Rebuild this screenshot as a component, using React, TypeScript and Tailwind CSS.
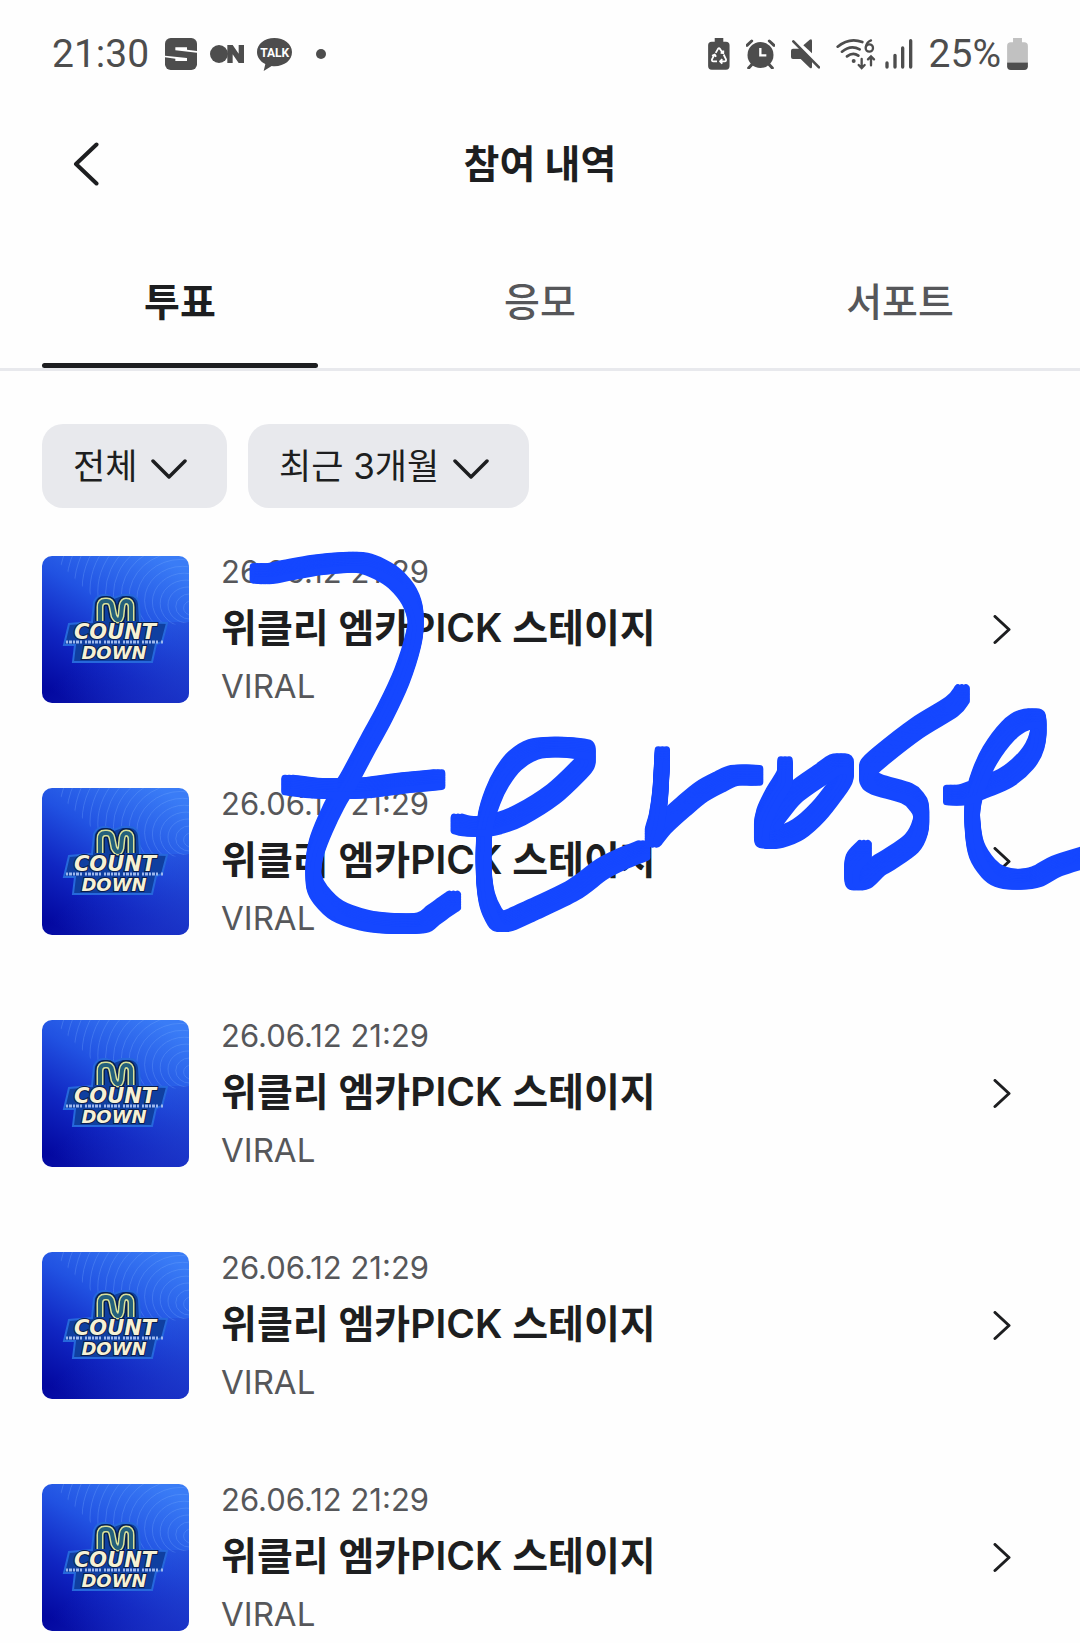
import React from "react";

type Point = [number, number];

/* Smooth curve through a list of pen positions. */
function smooth(points: Point[]): string {
  let d = `M${points[0][0]} ${points[0][1]}`;
  for (let i = 0; i < points.length - 1; i++) {
    const p0 = points[i - 1] ?? points[i];
    const p1 = points[i];
    const p2 = points[i + 1];
    const p3 = points[i + 2] ?? p2;
    d += `C${p1[0] + (p2[0] - p0[0]) / 6} ${p1[1] + (p2[1] - p0[1]) / 6} ${p2[0] - (p3[0] - p1[0]) / 6} ${p2[1] - (p3[1] - p1[1]) / 6} ${p2[0]} ${p2[1]}`;
  }
  return d;
}

const leftStrokes: Point[][] = [
  [[172, 130], [205, 131], [260, 121], [350, 105], [440, 97], [490, 99], [540, 118], [585, 147], [628, 200], [647, 262], [640, 330], [605, 440], [555, 548], [505, 640], [449, 745], [411, 810], [375, 885], [350, 950], [341, 1000], [342, 1055], [362, 1095], [412, 1142], [490, 1170], [570, 1180], [665, 1178], [700, 1155], [735, 1130], [760, 1113]],
  [[267, 765], [340, 774], [420, 776], [500, 773], [600, 760], [650, 755], [713, 749]],
  [[775, 882], [800, 888], [850, 889], [890, 882], [960, 855], [1060, 792], [1140, 717], [1161, 690], [1161, 665], [1140, 656], [1070, 651], [1000, 658], [945, 692], [905, 744], [878, 800], [857, 870], [851, 950], [852, 1040], [862, 1110], [884, 1160], [900, 1174], [925, 1172], [990, 1143], [1120, 1080], [1205, 1018], [1270, 985], [1328, 962]],
  [[1387, 680], [1385, 720], [1380, 800], [1370, 870], [1358, 922], [1395, 880], [1450, 830], [1505, 785], [1560, 755], [1605, 736], [1667, 736]],
];

const rightStrokes: Point[][] = [
  [[435, 320], [433, 355], [400, 410], [372, 470], [366, 525], [385, 535], [415, 533], [475, 508], [535, 455], [590, 385], [615, 345], [615, 315], [585, 314], [540, 345], [470, 395], [430, 440], [400, 480]],
  [[966, 104], [935, 140], [830, 205], [720, 290], [684, 325], [684, 352], [710, 373], [800, 400], [830, 425], [843, 450], [841, 500], [815, 550], [745, 600], [715, 618], [675, 655], [640, 655], [640, 608], [672, 571]],
  [[932, 405], [970, 404], [1030, 382], [1100, 352], [1160, 300], [1190, 245], [1193, 182], [1150, 181], [1105, 212], [1050, 285], [1018, 355], [999, 425], [998, 500], [1010, 570], [1045, 625], [1080, 650], [1130, 658], [1190, 650], [1250, 618], [1345, 588]],
];

/* The marker has a rectangular nib, built from offset copies of each stroke. */
const nib: Point[] = [-20, -15, -10, -5, 0, 5, 10, 15, 20].flatMap((y): Point[] => [[-12, y], [0, y], [12, y]]);

function Doodle() {
  return (
    <svg
      viewBox="-600 0 3240 1260"
      className="pointer-events-none absolute -top-[26px] left-0 w-full overflow-hidden"
      fill="none"
      stroke="#1547ff"
      strokeWidth="22"
      strokeLinecap="round"
      strokeLinejoin="round"
      aria-hidden="true"
    >
      {nib.map(([x, y]) => (
        <g key={`${x},${y}`} transform={`translate(${x} ${y})`}>
          {leftStrokes.map((s, i) => <path key={i} d={smooth(s)} />)}
          <g transform="translate(1320 390)">
            {rightStrokes.map((s, i) => <path key={i} d={smooth(s)} />)}
          </g>
        </g>
      ))}
    </svg>
  );
}

function StatusBar() {
  return (
    <div className="flex h-[108px] items-center justify-between px-[52px] font-['Roboto',sans-serif] text-[39px] text-[#4d4d4d]">
      <div className="flex items-center gap-[13px]">
        <span className="mr-[3px]">21:30</span>
        <svg width="32" height="32" viewBox="0 0 96 96" aria-hidden="true">
          <rect width="96" height="96" rx="17" fill="#4d4d4d" />
          <path d="M96 39 66 35 66 28 31 28 31 37 96 44ZM0 53 66 60 66 69 31 69 31 62 0 58Z" fill="#fff" />
        </svg>
        <svg width="34" height="18" viewBox="0 0 102 54" aria-hidden="true">
          <circle cx="27" cy="27" r="27" fill="#4d4d4d" />
          <path d="M52 54V0H68L86 26V0H102V54H86L68 28V54Z" fill="#4d4d4d" />
        </svg>
        <svg width="35" height="33" viewBox="0 0 105 99" aria-hidden="true">
          <path d="M52 0C23 0 0 18 0 42c0 16 10 29 25 36l-5 21 24-15c34 4 61-15 61-42C105 18 81 0 52 0Z" fill="#4d4d4d" />
          <text x="53" y="57" textAnchor="middle" fontSize="36" fontWeight="700" fill="#fff" fontFamily="Roboto, sans-serif">TALK</text>
        </svg>
        <span className="ml-[11px] size-[10px] rounded-full bg-[#4d4d4d]" />
      </div>
      <div className="flex items-center gap-4">
        <svg width="22" height="32" viewBox="54 52 66 97" aria-hidden="true">
          <path d="M74 52h26v11h8a11 11 0 0 1 11 11v63a11 11 0 0 1-11 11H65a11 11 0 0 1-11-11V74a11 11 0 0 1 11-11h9Z" fill="#4d4d4d" />
          <g fill="none" stroke="#fff" strokeWidth="5.500" strokeLinejoin="round">
            <path d="M77 97l7-12q3-4 6 0l8 12M100 90v8l-8-1" />
            <path d="M73 103l-7 13q-2 7 4 7h11M66 106l8-4 4 7" />
            <path d="M101 102l7 14q2 7-4 7H91M97 116l-7 7 7 7" />
          </g>
        </svg>
        <svg width="29" height="30" viewBox="171 55 87 90" aria-hidden="true">
          <circle cx="214.500" cy="103" r="39" fill="#4d4d4d" />
          <path d="M174 74l14-13M255 74l-14-13M188 132l-9 10M241 132l9 10" stroke="#4d4d4d" strokeWidth="9" strokeLinecap="round" />
          <path d="M214 82v22h18" fill="none" stroke="#fff" strokeWidth="7" />
        </svg>
        <svg width="29" height="30" viewBox="306 55 87 90" aria-hidden="true">
          <path d="M343 74 362 57Q369 53 369 61V98Z" fill="#4d4d4d" />
          <path d="M312 84H333L369 118V138Q369 146 362 141L335 115H312Q306 115 306 109V90Q306 84 312 84Z" fill="#4d4d4d" />
          <path d="M313 62 390 140" stroke="#4d4d4d" strokeWidth="8" strokeLinecap="round" />
        </svg>
        <div className="flex items-center gap-[9px]">
          <svg width="40" height="32" viewBox="440 53 120 96" fill="none" stroke="#4d4d4d" strokeLinecap="round" aria-hidden="true">
            <path d="M445 79Q480 50 519 65M458 94q26-22 53-7M473 108q18-14 34-2" strokeWidth="8" />
            <circle cx="493" cy="122" r="6" fill="#4d4d4d" stroke="none" />
            <path d="M517 116v27m-9-9 9 9 9-9M545 135v-27m-9 9 9-9 9 9" strokeWidth="7" />
            <circle cx="540" cy="83" r="11" strokeWidth="7" />
            <path d="M530 79q2-14 15-19" strokeWidth="7" />
          </svg>
          <svg width="28" height="30" viewBox="588 56 84 90" stroke="#4d4d4d" strokeWidth="10" strokeLinecap="round" aria-hidden="true">
            <path d="M594 128v12M618 105v35M641 83v57M665 61v79" />
          </svg>
        </div>
        <div className="flex items-center gap-[6px]">
          <span>25%</span>
          <svg width="21" height="32" viewBox="951 52 63 97" aria-hidden="true">
            <path d="M969 52h27v13h7a11 11 0 0 1 11 11v50H951V76a11 11 0 0 1 11-11h7Z" fill="#c1c1c1" />
            <path d="M951 126h63v12a11 11 0 0 1-11 11h-41a11 11 0 0 1-11-11Z" fill="#4d4d4d" />
          </svg>
        </div>
      </div>
    </div>
  );
}

function Filter({ label, value }: { label: string; value: string }) {
  return (
    <div className="relative">
      <select
        aria-label={label}
        className="h-[84px] appearance-none rounded-[21px] bg-[#e8e9ed] pr-[89px] pl-[31px] text-[35px] text-[#1d1e20]"
      >
        <option>{value}</option>
      </select>
      <svg
        viewBox="0 0 36 21"
        className="pointer-events-none absolute top-[35px] right-10 h-[21px] w-9"
        fill="none"
        stroke="#1d1e20"
        strokeWidth="3.500"
        strokeLinecap="round"
        strokeLinejoin="round"
        aria-hidden="true"
      >
        <path d="M2 2 18 18 34 2" />
      </svg>
    </div>
  );
}

const mCurve = "M58 65V51Q58 45 63 45H65Q69 45 70 50L72 60Q74 64 76 64T79 60L80 50Q81 45 84 45Q89 45 89 51V65";

function Thumbnail() {
  const rings = Array.from({ length: 17 }, (_, i) => 8 + i * 6);
  return (
    <svg viewBox="0 0 147 147" className="size-[147px] shrink-0 rounded-[10px]" role="img" aria-label="M COUNTDOWN">
      <defs>
        <linearGradient id="sky" x1="0.8" y1="0" x2="0.2" y2="1">
          <stop offset="0" stopColor="#3a7cf6" />
          <stop offset="0.4" stopColor="#2152e2" />
          <stop offset="0.7" stopColor="#1026c2" />
          <stop offset="1" stopColor="#0308a0" />
        </linearGradient>
        <linearGradient id="floor" x1="0" y1="0" x2="1" y2="0.6">
          <stop offset="0.4" stopColor="#1c34c8" stopOpacity="0" />
          <stop offset="1" stopColor="#1e36c6" stopOpacity="0.6" />
        </linearGradient>
        <clipPath id="upper"><path d="M10 0H147V66Q120 74 90 60L50 40Z" /></clipPath>
      </defs>
      <rect width="147" height="147" fill="url(#sky)" />
      <rect y="66" width="147" height="81" fill="url(#floor)" />
      <g clipPath="url(#upper)" fill="none" stroke="#7fb0ff" strokeOpacity="0.4" strokeWidth="0.700">
        {rings.map((r) => <ellipse key={r} cx={152 - r * 0.3} cy={54 - r * 0.25} rx={r} ry={r * 0.9} />)}
      </g>
      <path d="M50 66 52 46Q55 38 64 39L72 42 80 39H88Q96 40 97 48L98 66 125 67 120 86 114 88 110 106H31L33 89H22L27 68Z" fill="#0f3fa0" stroke="#2668dc" strokeWidth="2" />
      <path d={mCurve} fill="none" stroke="#07204f" strokeWidth="10" />
      <path d={mCurve} fill="none" stroke="#dbe29a" strokeWidth="7" />
      <path d={mCurve} fill="none" stroke="#24607c" strokeWidth="4" />
      <path d="M24 86H121" stroke="#9db8ee" strokeWidth="3" strokeDasharray="2 1 3 1 2 1 3 1 2 3" />
      <g
        fontFamily="DejaVu Sans, sans-serif"
        fontWeight="700"
        fontStyle="italic"
        textAnchor="middle"
        fill="#f6f1d4"
        stroke="#0a1c4a"
        strokeWidth="2"
        paintOrder="stroke"
      >
        <text x="73" y="83" fontSize="21">COUNT</text>
        <text x="72" y="103" fontSize="18">DOWN</text>
      </g>
    </svg>
  );
}

function HistoryRow() {
  return (
    <li>
      <a href="#detail" className="flex items-center pr-[69px]">
        <Thumbnail />
        <div className="ml-8 flex min-w-0 flex-1 flex-col">
          <time className="text-[31px] leading-[30px] text-[#56575a]">26.06.12 21:29</time>
          <strong className="mt-[13px] text-[39px] leading-[56px] font-semibold text-[#1d1e20]">위클리 엠카PICK 스테이지</strong>
          <span className="mt-[13px] text-[33px] leading-[34px] text-[#56575a]">VIRAL</span>
        </div>
        <svg
          viewBox="0 0 18 30"
          className="h-[30px] w-[18px]"
          fill="none"
          stroke="#1d1e20"
          strokeWidth="3"
          strokeLinecap="round"
          strokeLinejoin="round"
          aria-hidden="true"
        >
          <path d="M2 1.500 16 14.500 2 27.500" />
        </svg>
      </a>
    </li>
  );
}

export default function App() {
  const tabs = ["투표", "응모", "서포트"];
  return (
    <div className="min-h-screen overflow-x-hidden bg-[#fefefe] font-['Inter','Noto_Sans_CJK_KR',sans-serif] text-[#1d1e20]">
      <StatusBar />
      <header className="grid h-[112px] grid-cols-[1fr_auto_1fr] items-center px-[73px]">
        <button type="button" aria-label="뒤로" className="w-fit">
          <svg width="26" height="44" viewBox="0 0 26 44" fill="none" stroke="#1d1e20" strokeWidth="4" strokeLinecap="round" strokeLinejoin="round">
            <path d="M23.500 2.500 3 22 23.500 41.500" />
          </svg>
        </button>
        <h1 className="text-[39px] font-bold">참여 내역</h1>
      </header>
      <nav role="tablist" className="mt-[23px] grid grid-cols-3 border-b-[3px] border-[#e8e9ed]">
        {tabs.map((tab, i) => (
          <button
            key={tab}
            type="button"
            role="tab"
            aria-selected={i === 0}
            className={i === 0 ? "px-[42px] text-[39px] font-semibold" : "px-[42px] text-[39px] font-medium text-[#56575a]"}
          >
            <span className="block h-[120px] leading-[118px]">{tab}</span>
            <span className={i === 0 ? "block h-[5px] rounded-full bg-[#1d1e20]" : "block h-[5px]"} />
          </button>
        ))}
      </nav>
      <main>
        <div className="mt-[53px] flex gap-[21px] px-[42px]">
          <Filter label="유형" value="전체" />
          <Filter label="기간" value="최근 3개월" />
        </div>
        <div className="relative mt-12">
          <ul className="flex flex-col gap-[85px] pl-[42px]">
            {[0, 1, 2, 3, 4].map((n) => <HistoryRow key={n} />)}
          </ul>
          <Doodle />
        </div>
      </main>
    </div>
  );
}
